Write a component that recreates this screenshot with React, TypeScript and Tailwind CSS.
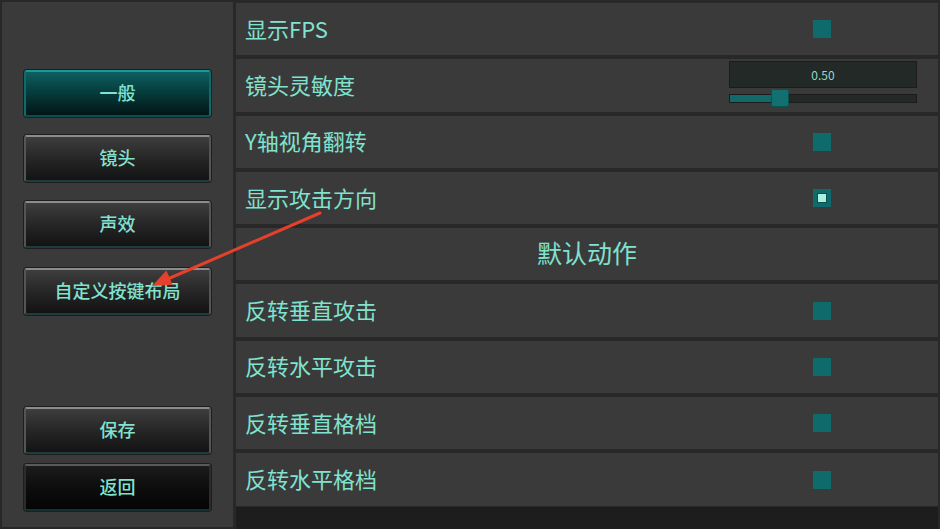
import React from "react";

const FONT = { fontFamily: '"Noto Sans CJK SC", "Noto Sans", sans-serif' };

function SideButton({ label, variant, className = "" }: { label: string; variant: "active" | "normal" | "dark"; className?: string }) {
  const styles = {
    active:
      "bg-gradient-to-b from-[#0e5f60] via-[#063a3b] to-[#021616] border-t-[2px] border-t-[#1a9797] border-x-[2px] border-x-[#0f6a6a] border-b-[2px] border-b-[#0b4e4f]",
    normal:
      "bg-gradient-to-b from-[#3e3e3e] via-[#262626] to-[#131313] border-t-[2px] border-t-[#8c8c8c] border-x-[2px] border-x-[#555555] border-b-[2px] border-b-[#1c3c3d]",
    dark:
      "bg-gradient-to-b from-[#1c1c1c] via-[#0d0d0d] to-[#050505] border-t-[2px] border-t-[#5a5a5a] border-x-[2px] border-x-[#2c2c2c] border-b-[2px] border-b-[#123233]",
  }[variant];
  return (
    <div
      className={`h-[47px] w-[187px] rounded-[3px] ${styles} flex items-center justify-center pb-[2px] text-[18px] font-medium text-[#80e2cf] shadow-[0_0_0_1px_#1e1e1e] ${className}`}
    >
      {label}
    </div>
  );
}

function Checkbox({ checked }: { checked?: boolean }) {
  return (
    <div className="flex h-[18px] w-[18px] items-center justify-center bg-[#0f6b6b]">
      {checked && <div className="h-[10px] w-[10px] border border-[#0a5050] bg-[#a9f0df]" />}
    </div>
  );
}

function Row({ children }: { children: React.ReactNode }) {
  return <div className="relative flex h-[52.3px] items-center bg-[#3a3a3a] pb-[3px] pl-[9px]">{children}</div>;
}

function Label({ text }: { text: string }) {
  return <span className="text-[22px] leading-none text-[#80e2cf]">{text}</span>;
}

function CheckRow({ text, checked }: { text: string; checked?: boolean }) {
  return (
    <Row>
      <Label text={text} />
      <div className="absolute left-[577px] top-1/2 -translate-y-1/2">
        <Checkbox checked={checked} />
      </div>
    </Row>
  );
}

export default function App() {
  return (
    <div className="relative flex h-[529px] w-[940px] overflow-hidden bg-[#282828] pl-[2px] pr-[2px] pt-[2px]" style={FONT}>
      <aside className="flex h-[525px] w-[231px] flex-col items-start bg-[#3a3a3a] pl-[22px]">
        <SideButton label="一般" variant="active" className="mt-[68px]" />
        <SideButton label="镜头" variant="normal" className="mt-[18px]" />
        <SideButton label="声效" variant="normal" className="mt-[19px]" />
        <SideButton label="自定义按键布局" variant="normal" className="mt-[20px]" />
        <SideButton label="保存" variant="normal" className="mt-[92px]" />
        <SideButton label="返回" variant="dark" className="mt-[10px]" />
      </aside>
      <main className="ml-[3px] flex flex-1 flex-col pt-[1px]">
        <div className="flex flex-col gap-[4px]">
          <CheckRow text="显示FPS" />
          <Row>
            <Label text="镜头灵敏度" />
            <div className="absolute left-[493px] top-[2px] flex w-[188px] flex-col gap-[6px]">
              <div className="flex h-[27px] items-center justify-center border border-[#1c1c1c] bg-[#232927] text-[12px] text-[#8edccb]">
                0.50
              </div>
              <div className="relative h-[9px] border border-[#1c1c1c] bg-[#232927]">
                <div className="absolute left-0 top-0 h-full w-[44px] bg-[#12696a]" />
                <div className="absolute left-[41px] top-[-6px] h-[18px] w-[18px] border border-[#0c5050] bg-[#137070]" />
              </div>
            </div>
          </Row>
          <CheckRow text="Y轴视角翻转" />
          <CheckRow text="显示攻击方向" checked />
          <div className="flex h-[52.3px] items-center justify-center bg-[#3a3a3a] pb-[4px]">
            <span className="text-[25px] leading-none text-[#80e2cf]">默认动作</span>
          </div>
          <CheckRow text="反转垂直攻击" />
          <CheckRow text="反转水平攻击" />
          <CheckRow text="反转垂直格档" />
          <CheckRow text="反转水平格档" />
        </div>
        <div className="mt-[1px] flex-1 bg-[#1d1d1d]" />
      </main>
      <svg className="pointer-events-none absolute left-0 top-0" width="940" height="529" viewBox="0 0 940 529">
        <line x1="320" y1="213" x2="170" y2="278" stroke="#e5402b" strokeWidth="3" strokeLinecap="round" />
        <polygon points="152,286 172.6,284.7 166.4,270.5" fill="#e5402b" />
      </svg>
    </div>
  );
}
